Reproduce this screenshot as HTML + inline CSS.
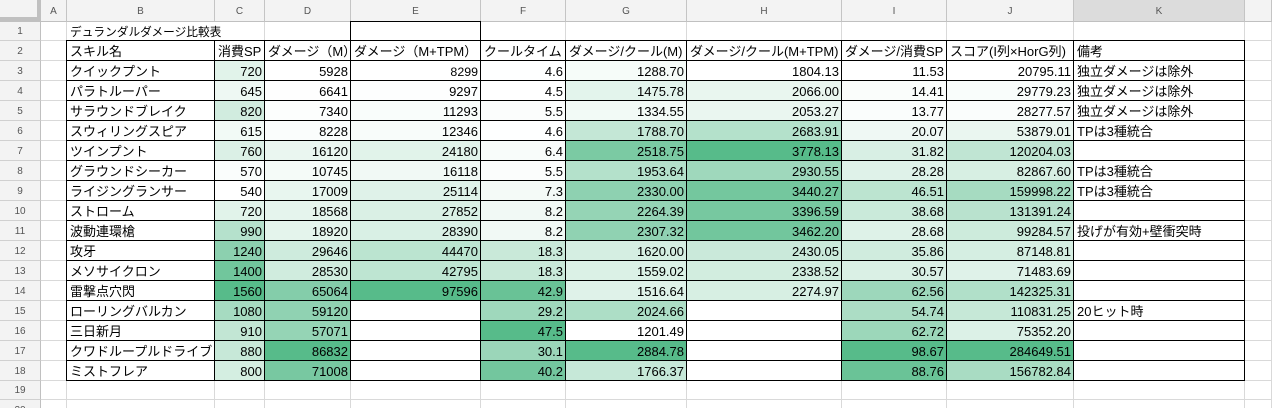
<!DOCTYPE html>
<html><head><meta charset="utf-8"><style>
html,body{margin:0;padding:0;width:1272px;height:408px;overflow:hidden;background:#fff}
#w{position:relative;width:1272px;height:408px;overflow:hidden}
table{position:absolute;left:0;top:0;width:1272px;table-layout:fixed;border-collapse:separate;border-spacing:0;font:13px/16px "Liberation Sans","Noto Sans CJK JP","IPAGothic",sans-serif;color:#000}
td,th{box-sizing:border-box;height:20px;padding:0 2px 0 3px;border-right:1px solid #d9d9d9;border-bottom:1px solid #d9d9d9;white-space:nowrap;overflow:hidden;text-align:right;vertical-align:bottom;font-weight:400}
td[style]{background:rgba(87,187,138,var(--t))}
.l{text-align:left}
tr.h th{height:22px;background:#f3f3f3;border-right:1px solid #c4c4c4;border-bottom:1px solid #c0c0c0;font-size:10px;color:#555;text-align:center;vertical-align:middle;padding:3px 0 0}
tr.h th.k{background:#dcdcdc}
td.n,th.n{background:#f3f3f3;border-right:1px solid #c0c0c0;border-bottom:1px solid #d0d0d0;font-size:10px;color:#555;text-align:center;vertical-align:middle;padding:2px 0 0}
tr.s td{height:19px}
.b{position:absolute;background:#000}
.v{top:40px;width:1px;height:341px}
.x{top:40px;left:66px;width:1179px;height:1px}
</style></head><body><div id="w">
<table>
<colgroup><col style="width:41px"><col style="width:26px"><col style="width:148px"><col style="width:50px"><col style="width:86px"><col style="width:130px"><col style="width:85px"><col style="width:121px"><col style="width:155px"><col style="width:105px"><col style="width:127px"><col style="width:171px"><col style="width:27px"></colgroup>
<tr class="h"><th></th><th>A</th><th>B</th><th>C</th><th>D</th><th>E</th><th>F</th><th>G</th><th>H</th><th>I</th><th>J</th><th class="k">K</th><th></th></tr>
<tr class="s"><td class="n">1</td><td></td><td class="l" colspan="2" style="--t:0;font-size:11.7px;line-height:14px">デュランダルダメージ比較表</td><td></td><td></td><td></td><td></td><td></td><td></td><td></td><td></td><td></td></tr>
<tr><td class="n">2</td><td></td><td class="l">スキル名</td><td class="l">消費SP</td><td class="l">ダメージ（M）</td><td class="l">ダメージ（M+TPM）</td><td class="l">クールタイム</td><td class="l">ダメージ/クール(M)</td><td class="l">ダメージ/クール(M+TPM)</td><td class="l">ダメージ/消費SP</td><td class="l">スコア(I列×HorG列)</td><td class="l">備考</td><td></td></tr>
<tr><td class="n">3</td><td></td><td class="l">クイックプント</td><td style="--t:.176">720</td><td style="--t:0">5928</td><td style="--t:0;font-size:12.4px">8299</td><td style="--t:.002">4.6</td><td style="--t:.052">1288.70</td><td style="--t:0">1804.13</td><td style="--t:0">11.53</td><td style="--t:0">20795.11</td><td class="l">独立ダメージは除外</td><td></td></tr>
<tr><td class="n">4</td><td></td><td class="l">パラトルーパー</td><td style="--t:.103">645</td><td style="--t:.009">6641</td><td style="--t:.011">9297</td><td style="--t:0">4.5</td><td style="--t:.163">1475.78</td><td style="--t:.133">2066.00</td><td style="--t:.033">14.41</td><td style="--t:.034">29779.23</td><td class="l">独立ダメージは除外</td><td></td></tr>
<tr><td class="n">5</td><td></td><td class="l">サラウンドブレイク</td><td style="--t:.275">820</td><td style="--t:.017">7340</td><td style="--t:.034">11293</td><td style="--t:.023">5.5</td><td style="--t:.079">1334.55</td><td style="--t:.126">2053.27</td><td style="--t:.026">13.77</td><td style="--t:.028">28277.57</td><td class="l">独立ダメージは除外</td><td></td></tr>
<tr><td class="n">6</td><td></td><td class="l">スウィリングスピア</td><td style="--t:.074">615</td><td style="--t:.028">8228</td><td style="--t:.045">12346</td><td style="--t:.002">4.6</td><td style="--t:.349">1788.70</td><td style="--t:.446">2683.91</td><td style="--t:.098">20.07</td><td style="--t:.125">53879.01</td><td class="l">TPは3種統合</td><td></td></tr>
<tr><td class="n">7</td><td></td><td class="l">ツインプント</td><td style="--t:.216">760</td><td style="--t:.126">16120</td><td style="--t:.178">24180</td><td style="--t:.044">6.4</td><td style="--t:.783">2518.75</td><td style="--t:1">3778.13</td><td style="--t:.233">31.82</td><td style="--t:.377">120204.03</td><td class="l"></td><td></td></tr>
<tr><td class="n">8</td><td></td><td class="l">グラウンドシーカー</td><td style="--t:.029">570</td><td style="--t:.06">10745</td><td style="--t:.088">16118</td><td style="--t:.023">5.5</td><td style="--t:.447">1953.64</td><td style="--t:.571">2930.55</td><td style="--t:.192">28.28</td><td style="--t:.235">82867.60</td><td class="l">TPは3種統合</td><td></td></tr>
<tr><td class="n">9</td><td></td><td class="l">ライジングランサー</td><td style="--t:0">540</td><td style="--t:.137">17009</td><td style="--t:.188">25114</td><td style="--t:.065">7.3</td><td style="--t:.67">2330.00</td><td style="--t:.829">3440.27</td><td style="--t:.401">46.51</td><td style="--t:.528">159998.22</td><td class="l">TPは3種統合</td><td></td></tr>
<tr><td class="n">10</td><td></td><td class="l">ストローム</td><td style="--t:.176">720</td><td style="--t:.156">18568</td><td style="--t:.219">27852</td><td style="--t:.086">8.2</td><td style="--t:.631">2264.39</td><td style="--t:.807">3396.59</td><td style="--t:.312">38.68</td><td style="--t:.419">131391.24</td><td class="l"></td><td></td></tr>
<tr><td class="n">11</td><td></td><td class="l">波動連環槍</td><td style="--t:.441">990</td><td style="--t:.161">18920</td><td style="--t:.225">28390</td><td style="--t:.086">8.2</td><td style="--t:.657">2307.32</td><td style="--t:.84">3462.20</td><td style="--t:.197">28.68</td><td style="--t:.297">99284.57</td><td class="l">投げが有効+壁衝突時</td><td></td></tr>
<tr><td class="n">12</td><td></td><td class="l">攻牙</td><td style="--t:.686">1240</td><td style="--t:.293">29646</td><td style="--t:.405">44470</td><td style="--t:.321">18.3</td><td style="--t:.249">1620.00</td><td style="--t:.317">2430.05</td><td style="--t:.279">35.86</td><td style="--t:.251">87148.81</td><td class="l"></td><td></td></tr>
<tr><td class="n">13</td><td></td><td class="l">メソサイクロン</td><td style="--t:.843">1400</td><td style="--t:.279">28530</td><td style="--t:.386">42795</td><td style="--t:.321">18.3</td><td style="--t:.212">1559.02</td><td style="--t:.271">2338.52</td><td style="--t:.218">30.57</td><td style="--t:.192">71483.69</td><td class="l"></td><td></td></tr>
<tr><td class="n">14</td><td></td><td class="l">雷撃点穴閃</td><td style="--t:1">1560</td><td style="--t:.731">65064</td><td style="--t:1">97596</td><td style="--t:.893">42.9</td><td style="--t:.187">1516.64</td><td style="--t:.239">2274.97</td><td style="--t:.586">62.56</td><td style="--t:.461">142325.31</td><td class="l"></td><td></td></tr>
<tr><td class="n">15</td><td></td><td class="l">ローリングバルカン</td><td style="--t:.529">1080</td><td style="--t:.657">59120</td><td></td><td style="--t:.574">29.2</td><td style="--t:.489">2024.66</td><td></td><td style="--t:.496">54.74</td><td style="--t:.341">110831.25</td><td class="l">20ヒット時</td><td></td></tr>
<tr><td class="n">16</td><td></td><td class="l">三日新月</td><td style="--t:.363">910</td><td style="--t:.632">57071</td><td></td><td style="--t:1">47.5</td><td style="--t:0">1201.49</td><td></td><td style="--t:.587">62.72</td><td style="--t:.207">75352.20</td><td class="l"></td><td></td></tr>
<tr><td class="n">17</td><td></td><td class="l">クワドループルドライブ</td><td style="--t:.333">880</td><td style="--t:1">86832</td><td></td><td style="--t:.595">30.1</td><td style="--t:1">2884.78</td><td></td><td style="--t:1">98.67</td><td style="--t:1">284649.51</td><td class="l"></td><td></td></tr>
<tr><td class="n">18</td><td></td><td class="l">ミストフレア</td><td style="--t:.255">800</td><td style="--t:.804">71008</td><td></td><td style="--t:.83">40.2</td><td style="--t:.336">1766.37</td><td></td><td style="--t:.886">88.76</td><td style="--t:.515">156782.84</td><td class="l"></td><td></td></tr>
<tr class="s"><td class="n">19</td><td></td><td></td><td></td><td></td><td></td><td></td><td></td><td></td><td></td><td></td><td></td><td></td></tr>
<tr><td class="n">20</td><td></td><td></td><td></td><td></td><td></td><td></td><td></td><td></td><td></td><td></td><td></td><td></td></tr>
</table>
<div style="position:absolute;left:0;top:0;width:37px;height:17px;background:#f3f3f3"></div>
<div style="position:absolute;left:37px;top:0;width:4px;height:22px;background:#c0c0c0"></div>
<div style="position:absolute;left:0;top:17px;width:41px;height:5px;background:#c0c0c0"></div>
<div class="b" style="left:350px;top:21px;width:131px;height:1px"></div>
<div class="b" style="left:350px;top:21px;width:1px;height:20px"></div>
<div class="b" style="left:480px;top:21px;width:1px;height:20px"></div>
<div class="b v" style="left:66px"></div><div class="b v" style="left:214px"></div><div class="b v" style="left:264px"></div><div class="b v" style="left:350px"></div><div class="b v" style="left:480px"></div><div class="b v" style="left:565px"></div><div class="b v" style="left:686px"></div><div class="b v" style="left:841px"></div><div class="b v" style="left:946px"></div><div class="b v" style="left:1073px"></div><div class="b v" style="left:1244px"></div>
<div class="b x" style="top:40px"></div><div class="b x" style="top:60px"></div><div class="b x" style="top:80px"></div><div class="b x" style="top:100px"></div><div class="b x" style="top:120px"></div><div class="b x" style="top:140px"></div><div class="b x" style="top:160px"></div><div class="b x" style="top:180px"></div><div class="b x" style="top:200px"></div><div class="b x" style="top:220px"></div><div class="b x" style="top:240px"></div><div class="b x" style="top:260px"></div><div class="b x" style="top:280px"></div><div class="b x" style="top:300px"></div><div class="b x" style="top:320px"></div><div class="b x" style="top:340px"></div><div class="b x" style="top:360px"></div><div class="b x" style="top:380px"></div>
</div></body></html>
